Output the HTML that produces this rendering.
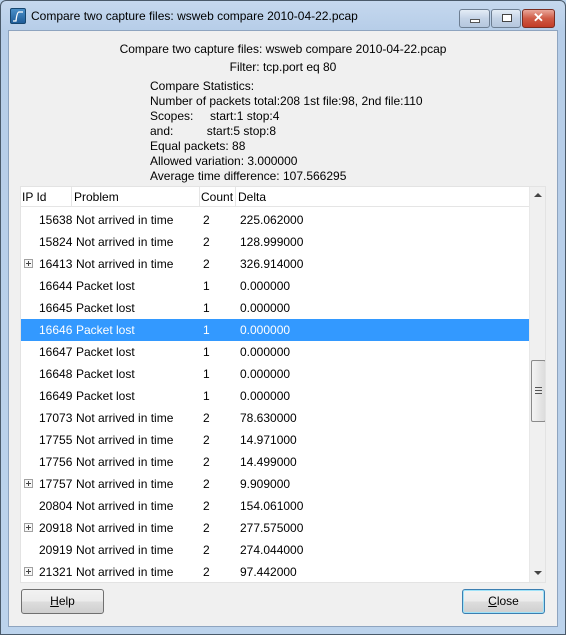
<!DOCTYPE html>
<html><head><style>
*{margin:0;padding:0;box-sizing:border-box}
body{width:566px;height:635px;position:relative;overflow:hidden;font-family:"Liberation Sans",sans-serif;font-size:12px;color:#000;background:#b9d1ea}
.frame{position:absolute;left:0;top:0;width:566px;height:635px;border:1px solid #4a5a6a;border-radius:6px 6px 0 0;background:linear-gradient(#c5d8ee,#b6cde8 30px,#bcd3ec)}
.client{position:absolute;left:8px;top:30px;width:550px;height:597px;background:#f0f0f0;border:1px solid #8ea4bf}
.t{position:absolute;white-space:nowrap}
.btn{position:absolute;top:9px;height:19px;border:1px solid #6d7e92;border-radius:3px;background:linear-gradient(#e4ecf6,#c4d3e6 50%,#b5c7de)}
.list{position:absolute;left:20px;top:186px;width:526px;height:397px;background:#fff;border:1px solid #e3e3e3;overflow:hidden}
.hdr{position:absolute;left:0;top:0;width:508px;height:20px;background:#fff;border-bottom:1px solid #e5e5e5}
.row{position:absolute;left:0;width:508px;height:22px}
.row span{position:absolute;top:4px}
.sel{background:#3399ff;color:#fff}
.pl{position:absolute;left:3px;top:6px;width:9px;height:9px;border:1px solid #a0a0a0;background:#f8f8f8}
.pl:before{content:"";position:absolute;left:1px;top:3px;width:5px;height:1px;background:#444}
.pl:after{content:"";position:absolute;left:3px;top:1px;width:1px;height:5px;background:#444}
.pb{position:absolute;height:25px;border:1px solid #707070;border-radius:3px;background:linear-gradient(#f2f2f2,#ebebeb 50%,#dddddd 51%,#cfcfcf);text-align:center;line-height:23px;font-size:12px}
</style></head><body>
<div class="frame"></div>
<div style="position:absolute;left:10px;top:8px;width:16px;height:16px;background:linear-gradient(#4a8fc8,#1f5d99);border:1px solid #16466f;border-radius:2px"><svg width="14" height="14" style="position:absolute;left:0;top:0"><path d="M2 12 H5 Q6 3 8 3 H12" stroke="#fff" stroke-width="1.3" fill="none"/></svg></div>
<div class="t" style="left:31px;top:9px;font-size:12px">Compare two capture files: wsweb compare 2010-04-22.pcap</div>
<div class="btn" style="left:459px;width:31px"><div style="position:absolute;left:10px;top:9px;width:10px;height:4px;background:#fff;border:1px solid #555"></div></div>
<div class="btn" style="left:491px;width:30px"><div style="position:absolute;left:10px;top:4px;width:10px;height:8px;border:1px solid #444;background:#fff"></div></div>
<div class="btn" style="left:522px;width:33px;background:linear-gradient(#e9a79a,#cf5a45 50%,#c23c27);border-color:#7a2c20;color:#fff;font-weight:bold;text-align:center;line-height:16px;font-size:13px">✕</div>
<div class="client"></div>
<div class="t" style="left:0;width:566px;text-align:center;top:42px">Compare two capture files: wsweb compare 2010-04-22.pcap</div>
<div class="t" style="left:0;width:566px;text-align:center;top:60px">Filter: tcp.port eq 80</div>
<div class="t" style="left:150px;top:79px;line-height:15px">Compare Statistics:<br>Number of packets total:208 1st file:98, 2nd file:110<br>Scopes:&nbsp;&nbsp;&nbsp;&nbsp; start:1 stop:4<br>and:&nbsp;&nbsp;&nbsp;&nbsp;&nbsp;&nbsp;&nbsp;&nbsp;&nbsp; start:5 stop:8<br>Equal packets: 88<br>Allowed variation: 3.000000<br>Average time difference: 107.566295</div>
<div class="list">
<div class="hdr"><span class="t" style="left:1px;top:3px">IP Id</span><span class="t" style="left:53px;top:3px">Problem</span><span class="t" style="left:180px;top:3px">Count</span><span class="t" style="left:217px;top:3px">Delta</span>
<div style="position:absolute;left:50px;top:0;width:1px;height:20px;background:#e5e5e5"></div><div style="position:absolute;left:178px;top:0;width:1px;height:20px;background:#e5e5e5"></div><div style="position:absolute;left:214px;top:0;width:1px;height:20px;background:#e5e5e5"></div></div>
<div id="rows"></div>
<div style="position:absolute;left:508px;top:0;width:17px;height:395px;background:#f0f0f0;border-left:1px solid #e8e8e8">
<div style="position:absolute;left:4px;top:6px;width:0;height:0;border:4px solid transparent;border-bottom:4px solid #444;border-top:0"></div>
<div style="position:absolute;left:1px;top:173px;width:15px;height:62px;border:1px solid #8a8a8a;border-radius:2px;background:linear-gradient(90deg,#f4f4f4,#dcdcdc)"><div style="position:absolute;left:3px;top:26px;width:7px;height:7px;border-top:1px solid #555;border-bottom:1px solid #555"><div style="margin-top:2px;height:1px;background:#555"></div></div></div>
<div style="position:absolute;left:4px;top:384px;width:0;height:0;border:4px solid transparent;border-top:4px solid #444;border-bottom:0"></div>
</div>
</div>
<div class="pb" style="left:21px;top:589px;width:83px"><u>H</u>elp</div>
<div class="pb" style="left:462px;top:589px;width:83px;border-color:#3c7fb1;box-shadow:inset 0 0 0 1px #9fe2f8"><u>C</u>lose</div>
<script>
var d=[["15638","Not arrived in time","2","225.062000"],["15824","Not arrived in time","2","128.999000"],["16413","Not arrived in time","2","326.914000",1],["16644","Packet lost","1","0.000000"],["16645","Packet lost","1","0.000000"],["16646","Packet lost","1","0.000000",0,1],["16647","Packet lost","1","0.000000"],["16648","Packet lost","1","0.000000"],["16649","Packet lost","1","0.000000"],["17073","Not arrived in time","2","78.630000"],["17755","Not arrived in time","2","14.971000"],["17756","Not arrived in time","2","14.499000"],["17757","Not arrived in time","2","9.909000",1],["20804","Not arrived in time","2","154.061000"],["20918","Not arrived in time","2","277.575000",1],["20919","Not arrived in time","2","274.044000"],["21321","Not arrived in time","2","97.442000",1]];
var h="";d.forEach(function(r,i){h+='<div class="row'+(r[5]?' sel':'')+'" style="top:'+(22+i*22)+'px">'+(r[4]?'<div class="pl"></div>':'')+'<span style="left:18px">'+r[0]+'</span><span style="left:55px">'+r[1]+'</span><span style="left:182px">'+r[2]+'</span><span style="left:219px">'+r[3]+'</span></div>'});
document.getElementById("rows").innerHTML=h;
</script>
</body></html>
